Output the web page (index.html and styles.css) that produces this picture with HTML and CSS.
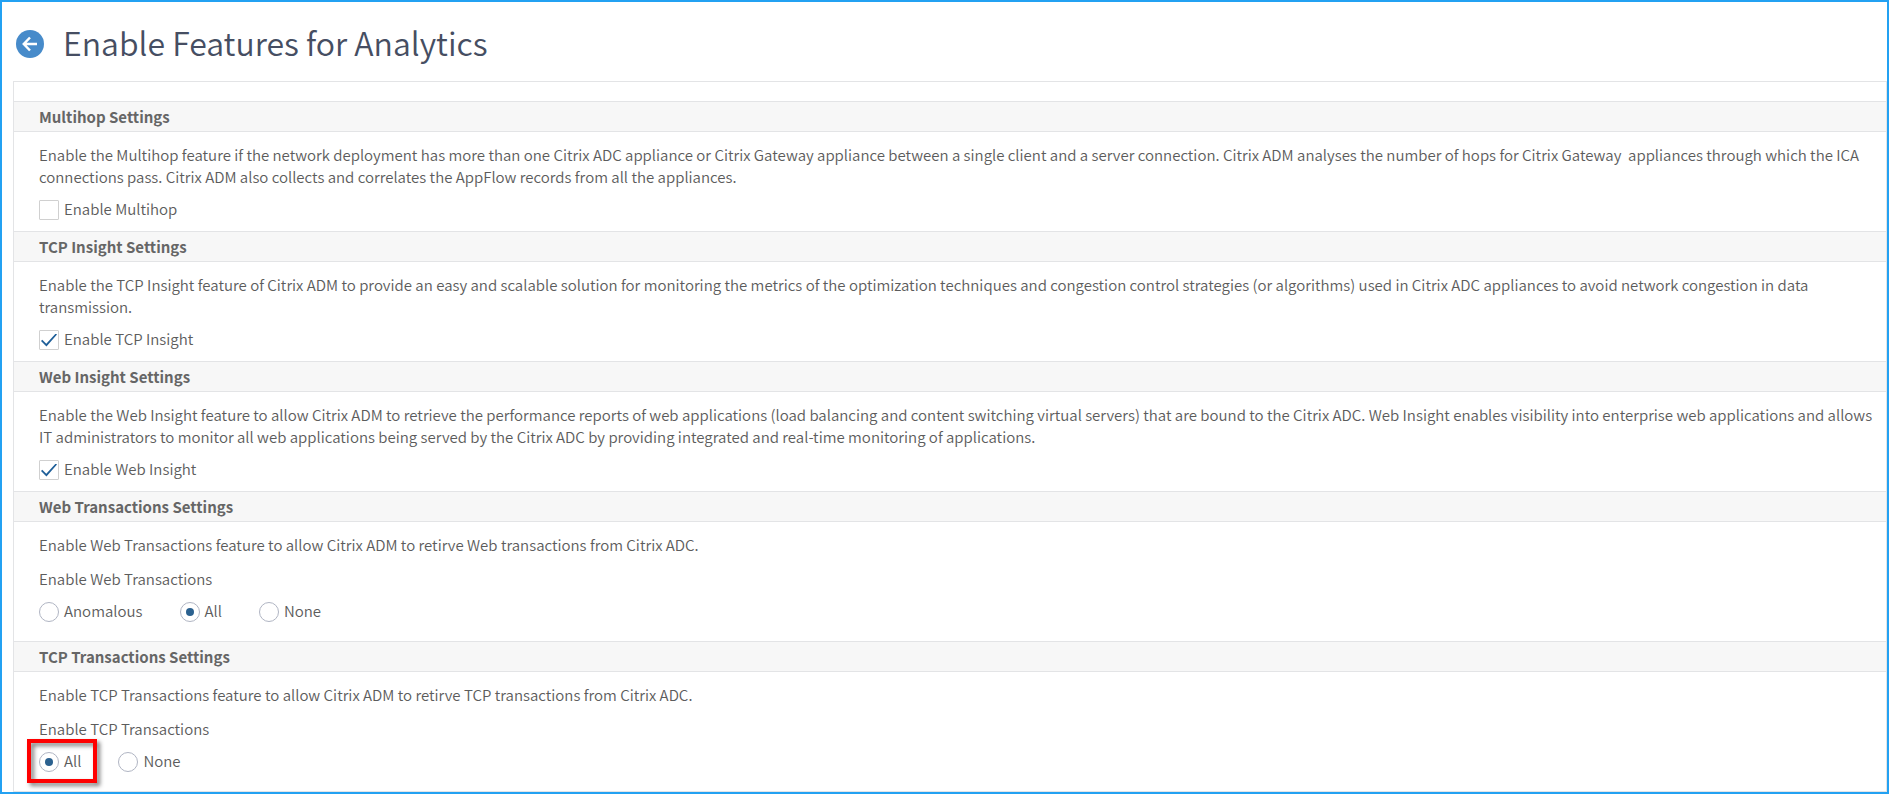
FILE: index.html
```html
<!DOCTYPE html>
<html lang="en">
<head>
<meta charset="utf-8">
<title>Enable Features for Analytics</title>
<link rel="stylesheet" href="styles.css">
</head>
<body>
<main class="page">
  <header class="page-header">
    <button class="back" type="button" aria-label="Back">
      <svg viewBox="0 0 28 28" width="28" height="28" aria-hidden="true">
        <circle cx="14" cy="14" r="14" fill="#478bca"/>
        <path d="M21 14H8.500M14 7.500L7.800 14L14 20.500" fill="none" stroke="#fff" stroke-width="2.500"/>
      </svg>
    </button>
    <h1 class="title">Enable Features for Analytics</h1>
  </header>
  <form class="panel">
    <section class="group">
      <h2 class="group-title">Multihop Settings</h2>
      <div class="group-body">
        <p class="text">Enable the Multihop feature if the network deployment has more than one Citrix ADC appliance or Citrix Gateway appliance between a single client and a server connection. Citrix ADM analyses the number of hops for Citrix Gateway&nbsp; appliances through which the ICA connections pass. Citrix ADM also collects and correlates the AppFlow records from all the appliances.</p>
        <label class="option"><input class="check" type="checkbox">Enable Multihop</label>
      </div>
    </section>
    <section class="group">
      <h2 class="group-title">TCP Insight Settings</h2>
      <div class="group-body">
        <p class="text">Enable the TCP Insight feature of Citrix ADM to provide an easy and scalable solution for monitoring the metrics of the optimization techniques and congestion control strategies (or algorithms) used in Citrix ADC appliances to avoid network congestion in data transmission.</p>
        <label class="option"><input class="check" type="checkbox" checked>Enable TCP Insight</label>
      </div>
    </section>
    <section class="group">
      <h2 class="group-title">Web Insight Settings</h2>
      <div class="group-body">
        <p class="text">Enable the Web Insight feature to allow Citrix ADM to retrieve the performance reports of web applications (load balancing and content switching virtual servers) that are bound to the Citrix ADC. Web Insight enables visibility into enterprise web applications and allows IT administrators to monitor all web applications being served by the Citrix ADC by providing integrated and real-time monitoring of applications.</p>
        <label class="option"><input class="check" type="checkbox" checked>Enable Web Insight</label>
      </div>
    </section>
    <section class="group">
      <h2 class="group-title">Web Transactions Settings</h2>
      <div class="group-body group-body-radio">
        <p class="text">Enable Web Transactions feature to allow Citrix ADM to retirve Web transactions from Citrix ADC.</p>
        <p class="text" id="web-tx">Enable Web Transactions</p>
        <div class="radios" role="radiogroup" aria-labelledby="web-tx">
          <label class="option"><input class="radio" type="radio" name="web">Anomalous</label>
          <label class="option"><input class="radio" type="radio" name="web" checked>All</label>
          <label class="option"><input class="radio" type="radio" name="web">None</label>
        </div>
      </div>
    </section>
    <section class="group">
      <h2 class="group-title">TCP Transactions Settings</h2>
      <div class="group-body group-body-radio">
        <p class="text">Enable TCP Transactions feature to allow Citrix ADM to retirve TCP transactions from Citrix ADC.</p>
        <p class="text" id="tcp-tx">Enable TCP Transactions</p>
        <div class="radios" role="radiogroup" aria-labelledby="tcp-tx">
          <label class="option marked"><input class="radio" type="radio" name="tcp" checked>All</label>
          <label class="option"><input class="radio" type="radio" name="tcp">None</label>
        </div>
      </div>
    </section>
  </form>
</main>
</body>
</html>
```
FILE: styles.css
```css
* { box-sizing: border-box; }
body {
  margin: 0;
  background: #fff;
  color: #5c5c5c;
  font: 350 15px/22px "Noto Sans CJK SC", "Open Sans", sans-serif;
}
h1, h2, p { margin: 0; }
.page {
  min-height: 100vh;
  padding-left: 11px;
  border: 2px solid #23a1f2;
}
.page-header {
  display: flex;
  align-items: center;
  gap: 19px;
  height: 79px;
  padding: 4px 3px 0;
}
.back {
  display: flex;
  padding: 0;
  border: 0;
  background: none;
}
.title {
  padding-bottom: 4px;
  color: #464e62;
  font-size: 32px;
  font-weight: 350;
  line-height: 44px;
}
.panel {
  padding-top: 19px;
  border: 1px solid #e3e4e6;
}
.group-title {
  padding: 0 25px;
  border: solid #e3e4e6;
  border-width: 1px 0;
  background: #f7f7f7;
  color: #666;
  font-size: 15px;
  font-weight: 700;
  line-height: 29px;
}
.group-body {
  display: flex;
  flex-direction: column;
  align-items: flex-start;
  gap: 12px;
  padding: 12px 12px 11px 25px;
}
.group-body-radio { padding-bottom: 19px; }
.option {
  position: relative;
  display: flex;
  gap: 5px;
  line-height: 18px;
}
.check, .radio {
  appearance: none;
  display: grid;
  place-content: center;
  width: 20px;
  height: 20px;
  margin: 0;
  border: 1px solid #d0d0d0;
  border-radius: 1px;
  background: #fff;
}
.check:checked::before {
  content: "";
  width: 16px;
  height: 13px;
  background: #1f5f99;
  clip-path: polygon(0 58%, 8% 49%, 33% 79%, 92% 0, 100% 8%, 34% 100%);
}
.radio {
  border-color: #b0b5c3;
  border-radius: 50%;
}
.radio:checked::before {
  content: "";
  width: 8px;
  height: 8px;
  border-radius: 50%;
  background: #2b618f;
}
.radios {
  display: flex;
  gap: 37px;
}
.marked::after {
  content: "";
  position: absolute;
  inset: -13px -16px -11px -12px;
  border: 4px solid #f00;
  filter: drop-shadow(3px 3px 2px rgba(0, 0, 0, .5));
  pointer-events: none;
}
```
